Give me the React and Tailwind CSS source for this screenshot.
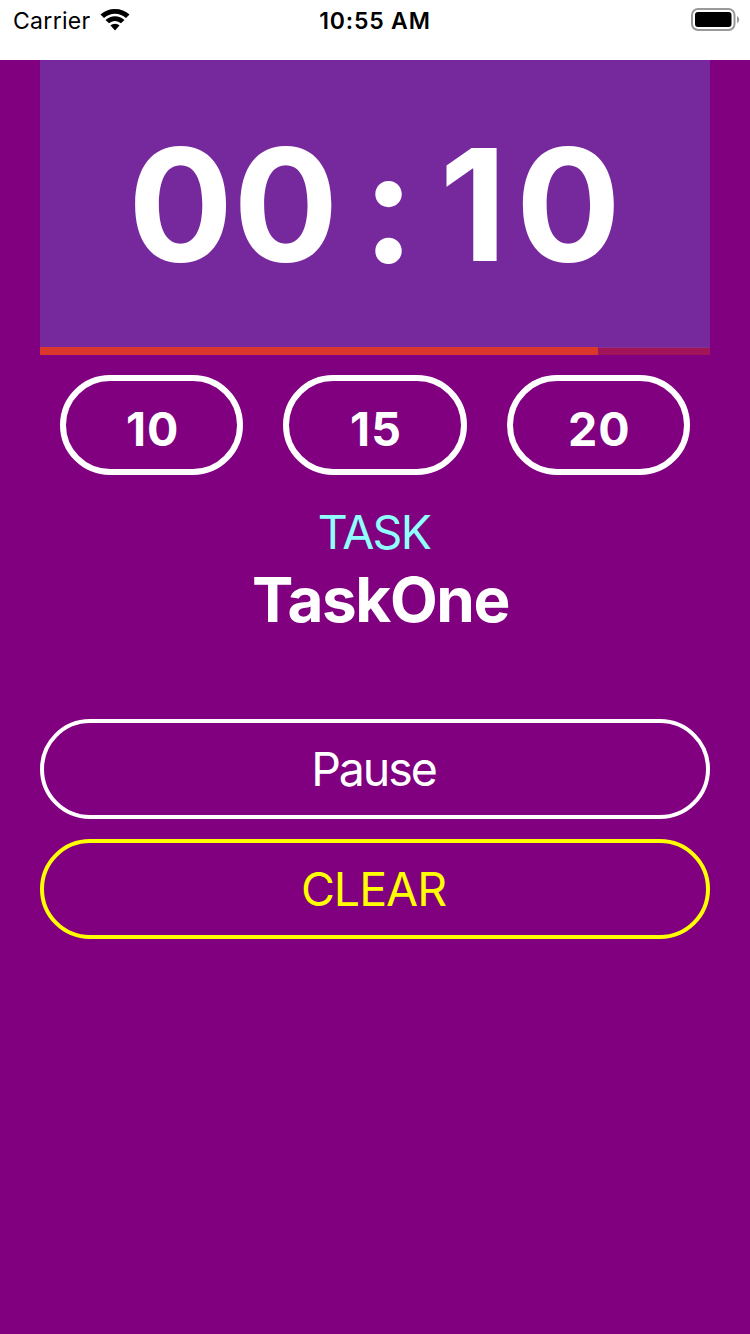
const presets = [10, 15, 20];

function StatusBar() {
  return (
    <header className="h-[60px] bg-white text-black grid grid-cols-3 items-start">
      <div className="flex items-center gap-[9px] pl-[13px] h-10">
        <span className="text-[23px] leading-10 tracking-[0.3px] pt-[2px]">Carrier</span>
        <svg className="w-[30px] h-[22px]" viewBox="0 0 29 22">
          <path d="M14.500 0C8.900 0 3.700 2 0 5.600L3.500 9C6.400 6.300 10.300 4.700 14.500 4.700S22.600 6.300 25.500 9L29 5.600C25.300 2 20.100 0 14.500 0Z" />
          <path d="M14.500 7.200C10.900 7.200 7.600 8.600 5 11L8.500 14.300C10.100 12.800 12.200 11.900 14.500 11.900S18.900 12.800 20.500 14.300L24 11C21.400 8.600 18.100 7.200 14.500 7.200Z" />
          <path d="M14.500 14.800C12.800 14.800 11.200 15.500 10 16.600L14.500 21.500L19 16.600C17.800 15.500 16.200 14.800 14.500 14.800Z" />
        </svg>
      </div>
      <div className="text-center text-[23px] leading-10 font-semibold tracking-[0.8px] pt-px">10:55 AM</div>
      <div className="flex justify-end pt-[8px] pr-[9px]">
        <svg className="w-[50px] h-[24px]" viewBox="0 0 50 24">
          <rect x="1" y="1" width="42.500" height="21" rx="6" fill="none" stroke="#999" strokeWidth="2" />
          <rect x="4" y="4" width="36.500" height="15" rx="3" />
          <path d="M46 8Q48.200 9 48.200 11.500T46 15Z" fill="#999" />
        </svg>
      </div>
    </header>
  );
}

export default function App() {
  return (
    <div className="w-[750px] h-[1334px] bg-[#800080] text-white font-['Inter',sans-serif] overflow-hidden">
      <StatusBar />
      <main className="px-10">
        <div className="h-[287px] bg-[#76289d] flex justify-center items-center font-bold text-[156px] leading-none pt-[3px]">
          <span className="-ml-px">00</span>
          <span className="ml-[24px] mr-[25px] pt-[3px]">:</span>
          <span className="tracking-[9px] -mr-[9px]">10</span>
        </div>
        <div className="h-2 bg-[#a2145a] flex">
          <div className="h-full w-[558px] bg-[#db372c]" />
          <div className="flex-1 border-t border-[#89308b]" />
        </div>
        <div className="flex gap-10 px-5 pt-5">
          {presets.map((n) => (
            <button key={n} className="flex-1 h-[100px] rounded-full border-[6px] border-white text-[46.5px] font-bold leading-none pt-[9px] pl-[2px] tracking-[1px]">
              {n}
            </button>
          ))}
        </div>
        <div className="h-[244px] pt-[28px] text-center">
          <div className="text-[46.5px] leading-[58px] tracking-[-1.7px] pr-[2px] text-[#8fffff]">TASK</div>
          <div className="text-[62px] leading-[77px] font-bold tracking-[-1.4px] pl-[11px]">TaskOne</div>
        </div>
        <div className="flex flex-col gap-5">
          <button className="h-[100px] rounded-full border-4 border-white text-[46.5px] tracking-[-2.1px] pr-[3px] pt-px">Pause</button>
          <button className="h-[100px] rounded-full border-4 border-[#ffff00] text-[#ffff00] text-[46.5px] tracking-[-1px] pr-[3px] pt-px">CLEAR</button>
        </div>
      </main>
    </div>
  );
}
